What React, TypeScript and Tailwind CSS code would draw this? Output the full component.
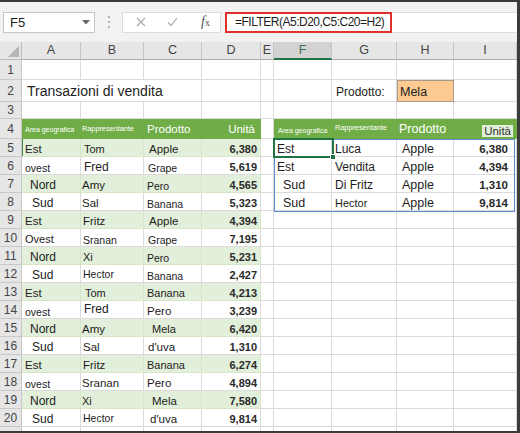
import React from 'react';

const GRID =
  'grid grid-cols-[22px_59px_63px_58px_59px_13px_58px_65px_57px_63px]';

type Cell = { t: string; c?: string };

const RowHead: React.FC<{ n?: number }> = ({ n }) => (
  <div className="bg-[#e6e6e6] border-r border-b border-[#c8c8c8] flex items-center justify-center text-[12px] text-[#444] leading-none">
    {n}
  </div>
);

const Box: React.FC<{
  className?: string;
  line?: string;
  children?: React.ReactNode;
}> = ({ className = '', line = 'border-[#dadada]', children }) => (
  <div
    className={`border-r border-b ${line} flex items-end pb-[1px] overflow-hidden whitespace-nowrap leading-none text-[#1d1d1d] ${className}`}
  >
    {children}
  </div>
);

const Row: React.FC<{ n?: number; h: string; children?: React.ReactNode }> = ({
  n,
  h,
  children,
}) => (
  <div className={`${GRID} ${h}`}>
    <RowHead n={n} />
    {children}
  </div>
);

// left table A5:D20
const region: Record<string, string> = {
  Est: 'pl-[3px] text-[11.5px]',
  ovest: 'pl-[3px] text-[10.5px]',
  Ovest: 'pl-[3px] text-[11px]',
  Nord: 'pl-[8px] text-[12px]',
  Sud: 'pl-[10px] text-[12px]',
};

const leftRows: [string, Cell, Cell, string][] = [
  ['Est', { t: 'Tom', c: 'pl-[3px] text-[11px]' }, { t: 'Apple', c: 'pl-[5px] text-[11.5px]' }, '6,380'],
  ['ovest', { t: 'Fred', c: 'pl-[3px] text-[12px]' }, { t: 'Grape', c: 'pl-[4px] text-[10.5px]' }, '5,619'],
  ['Nord', { t: 'Amy', c: 'pl-[1px] text-[11.5px]' }, { t: 'Pero', c: 'pl-[3px] text-[10.5px]' }, '4,565'],
  ['Sud', { t: 'Sal', c: 'pl-[1px] text-[11.5px]' }, { t: 'Banana', c: 'pl-[3px] text-[10.5px]' }, '5,323'],
  ['Est', { t: 'Fritz', c: 'pl-[2px] text-[11.5px]' }, { t: 'Apple', c: 'pl-[5px] text-[11.5px]' }, '4,394'],
  ['Ovest', { t: 'Sranan', c: 'pl-[2px] text-[10.5px]' }, { t: 'Grape', c: 'pl-[4px] text-[10.5px]' }, '7,195'],
  ['Nord', { t: 'Xi', c: 'pl-[2px] text-[11px]' }, { t: 'Pero', c: 'pl-[3px] text-[10.5px]' }, '5,231'],
  ['Sud', { t: 'Hector', c: 'pl-[2px] text-[10.5px] pb-[3px]' }, { t: 'Banana', c: 'pl-[3px] text-[10.5px]' }, '2,427'],
  ['Est', { t: 'Tom', c: 'pl-[4px] text-[11px]' }, { t: 'Banana', c: 'pl-[3px] text-[11px]' }, '4,213'],
  ['ovest', { t: 'Fred', c: 'pl-[3px] text-[12px] pb-[3px]' }, { t: 'Pero', c: 'pl-[3px] text-[11.5px]' }, '3,239'],
  ['Nord', { t: 'Amy', c: 'pl-[1px] text-[11.5px]' }, { t: 'Mela', c: 'pl-[8px] text-[11px]' }, '6,420'],
  ['Sud', { t: 'Sal', c: 'pl-[2px] text-[11.5px]' }, { t: "d'uva", c: 'pl-[4px] text-[11.5px]' }, '1,310'],
  ['Est', { t: 'Fritz', c: 'pl-[2px] text-[11.5px]' }, { t: 'Banana', c: 'pl-[3px] text-[11px]' }, '6,274'],
  ['ovest', { t: 'Sranan', c: 'pl-[1px] text-[11.5px]' }, { t: 'Pero', c: 'pl-[3px] text-[11.5px]' }, '4,894'],
  ['Nord', { t: 'Xi', c: 'pl-[1px] text-[11px]' }, { t: 'Mela', c: 'pl-[8px] text-[11.5px]' }, '7,580'],
  ['Sud', { t: 'Hector', c: 'pl-[2px] text-[10.5px] pb-[3px]' }, { t: "d'uva", c: 'pl-[6px] text-[11.5px]' }, '9,814'],
];

// spilled result F5:I8
const rightRows: [Cell, Cell, string][] = [
  [{ t: 'Est', c: 'pl-[3px] text-[12px]' }, { t: 'Luca', c: 'pl-[3px] text-[12px]' }, '6,380'],
  [{ t: 'Est', c: 'pl-[3px] text-[12px]' }, { t: 'Vendita', c: 'pl-[3px] text-[12px]' }, '4,394'],
  [{ t: 'Sud', c: 'pl-[9px] text-[12.5px]' }, { t: 'Di Fritz', c: 'pl-[3px] text-[12px]' }, '1,310'],
  [{ t: 'Sud', c: 'pl-[9px] text-[12.5px]' }, { t: 'Hector', c: 'pl-[3px] text-[11px]' }, '9,814'],
];

const cols = ['A', 'B', 'C', 'D', 'E', 'F', 'G', 'H', 'I'];

const Toolbar: React.FC = () => (
  <div className="h-[40px] bg-[#f2f2f2] flex items-center pl-[3px]">
    {/* name box */}
    <div className="w-[92px] h-[21px] bg-white border border-[#c6c6c6] flex items-center justify-between pl-[6px] pr-[4px]">
      <span className="text-[13px] text-[#222] leading-none">F5</span>
      <svg width="8" height="5" viewBox="0 0 8 5">
        <polygon points="0,0 8,0 4,4.5" fill="#666" />
      </svg>
    </div>
    <div className="ml-[12px] w-[3px] flex flex-col gap-[3px] items-center">
      <span className="w-[2px] h-[2px] bg-[#b5b5b5]" />
      <span className="w-[2px] h-[2px] bg-[#b5b5b5]" />
      <span className="w-[2px] h-[2px] bg-[#b5b5b5]" />
    </div>
    {/* cancel / enter / fx */}
    <div className="ml-[12px] w-[99px] h-[21px] bg-white border border-[#dcdcdc] flex items-center">
      <svg className="ml-[13px]" width="10" height="10" viewBox="0 0 10 10">
        <path d="M1 1 L9 9 M9 1 L1 9" stroke="#ababab" strokeWidth="1.2" fill="none" />
      </svg>
      <svg className="ml-[21px]" width="11" height="10" viewBox="0 0 11 10">
        <path d="M1 5.5 L4 8.5 L10 1" stroke="#ababab" strokeWidth="1.2" fill="none" />
      </svg>
      <span className="ml-[23px] italic font-['Liberation_Serif',serif] text-[14px] text-[#555] leading-none">
        f<span className="text-[10px] not-italic font-['Liberation_Serif',serif]">x</span>
      </span>
    </div>
    {/* formula input */}
    <div className="ml-[4px] flex-1 h-[21px] bg-white border-y border-[#dcdcdc] flex items-stretch">
      <div className="w-[167px] border-2 border-[#e0302c] flex items-center pl-[8px] -my-[1px]">
        <span className="text-[12px] tracking-[-0.5px] text-[#1d1d1d] leading-none whitespace-nowrap">
          =FILTER(A5:D20,C5:C20=H2)
        </span>
      </div>
    </div>
  </div>
);

const App: React.FC = () => {
  return (
    <div className="w-[520px] h-[433px] overflow-hidden bg-white border-t-2 border-b-2 border-r-[3px] border-[#3b3b3b] font-['Liberation_Sans',Arial,sans-serif]">
      <Toolbar />
      <div className="relative">
        {/* column headers */}
        <div className={`${GRID} h-[18px] bg-[#e6e6e6]`}>
          <div className="border-r border-b border-[#bdbdbd] flex items-end justify-end p-[2px]">
            <svg width="11" height="11" viewBox="0 0 11 11">
              <polygon points="11,0 11,11 0,11" fill="#b5b5b5" />
            </svg>
          </div>
          {cols.map((c) =>
            c === 'F' ? (
              <div
                key={c}
                className="bg-[#d3d3d3] border-r border-[#c6c6c6] border-b-2 border-b-[#217346] flex items-center justify-center text-[12.5px] text-[#3e6f52] leading-none"
              >
                {c}
              </div>
            ) : (
              <div
                key={c}
                className="border-r border-b border-[#c6c6c6] border-b-[#ababab] flex items-center justify-center text-[12.5px] text-[#444] leading-none"
              >
                {c}
              </div>
            )
          )}
        </div>

        {/* row 1 */}
        <Row n={1} h="h-[20px]">
          {cols.map((c) => (
            <Box key={c} />
          ))}
        </Row>

        {/* row 2 */}
        <Row n={2} h="h-[22px]">
          <Box className="col-span-3 pl-[5px] pb-[3px] text-[14px]">Transazioni di vendita</Box>
          <Box />
          <Box />
          <Box />
          <Box className="pl-[4px] pb-[3px] text-[12px]">Prodotto:</Box>
          <Box
            line="border-[#a89b8c]"
            className="bg-[#fcc990] border-l border-t pl-[2px] pb-[3px] text-[12.5px]"
          >
            Mela
          </Box>
          <Box />
        </Row>

        {/* row 3 */}
        <Row n={3} h="h-[17px]">
          {cols.map((c) => (
            <Box key={c} />
          ))}
        </Row>

        {/* row 4: table headers */}
        <Row n={4} h="h-[20px]">
          <Box line="border-[#70ad47]" className="bg-[#70ad47] pl-[3px] pb-[5px] text-[7px] text-white">
            Area geografica
          </Box>
          <Box line="border-[#70ad47]" className="bg-[#70ad47] pl-[1px] pb-[6px] text-[7.3px] text-white">
            Rappresentante
          </Box>
          <Box line="border-[#70ad47]" className="bg-[#70ad47] pl-[3px] pb-[3px] text-[11.5px] text-white">
            Prodotto
          </Box>
          <Box line="border-[#70ad47]" className="bg-[#70ad47] justify-end pr-[5px] pb-[3px] text-[11.5px] text-white">
            Unità
          </Box>
          <Box />
          <Box line="border-[#70ad47]" className="bg-[#70ad47] pl-[4px] pb-[4px] text-[7px] text-white">
            Area geografica
          </Box>
          <Box line="border-[#70ad47]" className="bg-[#70ad47] pl-[3px] pb-[7px] text-[7.3px] text-white">
            Rappresentante
          </Box>
          <Box line="border-[#70ad47]" className="bg-[#70ad47] pl-[2px] pb-[3px] text-[12.5px] text-white">
            Prodotto
          </Box>
          <Box line="border-[#70ad47]" className="bg-[#70ad47] justify-end pr-[3px] pb-[1px]">
            <span className="bg-[#e2efda] px-[2px] pt-[1px] text-[11.5px] text-[#333] leading-none">Unità</span>
          </Box>
        </Row>

        {/* rows 5-20 */}
        {leftRows.map(([a, b, c, d], i) => {
          const n = i + 5;
          const band = i % 2 === 0;
          const fill = band ? 'bg-[#e2efda]' : 'bg-white';
          const line = band ? 'border-[#d5e6c9]' : 'border-[#dadada]';
          const right = rightRows[i];
          return (
            <Row key={n} n={n} h="h-[18px]">
              <Box
                line={line}
                className={`${fill} ${region[a]} ${n === 5 ? 'shadow-[inset_1px_0_0_#3f8a4f]' : ''}`}
              >
                {a}
              </Box>
              <Box line={line} className={`${fill} ${b.c}`}>
                {b.t}
              </Box>
              <Box line={line} className={`${fill} ${c.c}`}>
                {c.t}
              </Box>
              <Box line={line} className={`${fill} justify-end pr-[3px] text-[11px] font-bold text-[#2a2a2a]`}>
                {d}
              </Box>
              <Box />
              {right ? (
                <>
                  <Box className={right[0].c}>{right[0].t}</Box>
                  <Box className={right[1].c}>{right[1].t}</Box>
                  <Box className="pl-[5px] text-[12.5px]">Apple</Box>
                  <Box className="justify-end pr-[8px] text-[11.5px] font-bold text-[#2a2a2a]">{right[2]}</Box>
                </>
              ) : (
                <>
                  <Box />
                  <Box />
                  <Box />
                  <Box />
                </>
              )}
            </Row>
          );
        })}

        {/* row 21, only its top edge is visible */}
        <Row h="h-[18px]">
          {cols.map((c) => (
            <Box key={c} />
          ))}
        </Row>

        {/* spill range outline */}
        <div className="absolute left-[274px] top-[97px] w-[241px] h-[73px] border-[1.5px] border-[#5b8cd4] pointer-events-none" />
        {/* active cell F5 */}
        <div className="absolute left-[273px] top-[96px] w-[61px] h-[20px] border-2 border-[#217346] pointer-events-none">
          <div className="absolute -right-[4px] -bottom-[4px] w-[6px] h-[6px] bg-[#217346] border border-white" />
        </div>
      </div>
    </div>
  );
};

export default App;
